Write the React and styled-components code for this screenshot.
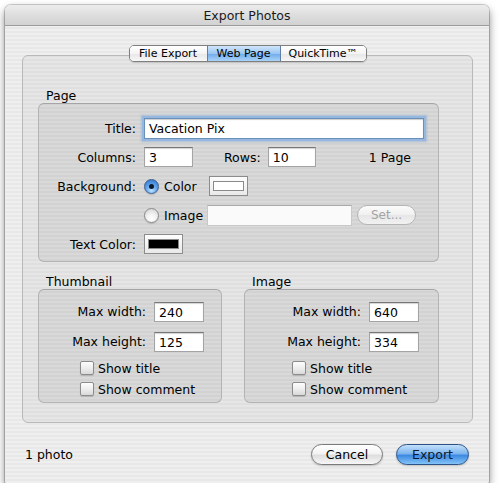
import React from "react";
import styled, { createGlobalStyle, css } from "styled-components";

const GlobalStyle = createGlobalStyle`
  html, body {
    margin: 0;
    padding: 0;
    background: #ffffff;
  }
  body {
    font-family: "DejaVu Sans", "Liberation Sans", sans-serif;
    font-size: 12.5px;
    color: #000;
  }
`;

const Page = styled.div`
  padding: 5px 0 0 5px;
`;

const Window = styled.div`
  width: 484px;
  height: 478px;
  box-sizing: border-box;
  display: flex;
  flex-direction: column;
  border-radius: 6px 6px 2px 2px;
  overflow: hidden;
  background: repeating-linear-gradient(
    180deg,
    #efefef 0px,
    #efefef 2px,
    #e8e8e8 2px,
    #e8e8e8 4px
  );
  box-shadow: 0 0 0 1px rgba(0, 0, 0, 0.18), 0 4px 9px rgba(0, 0, 0, 0.5);
`;

const TitleBar = styled.div`
  height: 20px;
  line-height: 21px;
  text-align: center;
  font-size: 12.5px;
  color: #1a1a1a;
  border-bottom: 1px solid #9c9c9c;
  background: linear-gradient(180deg, #ececec 0%, #dedede 50%, #d2d2d2 100%);
`;

const Content = styled.div`
  padding: 19px 16px 0 17px;
  display: flex;
  flex-direction: column;
`;

const Tabs = styled.div`
  position: relative;
  z-index: 1;
  align-self: center;
  display: flex;
  height: 17px;
  box-sizing: border-box;
  border: 1px solid #7f7f7f;
  border-radius: 5px;
  overflow: hidden;
  box-shadow: 0 1px 1px rgba(0, 0, 0, 0.15);
`;

const Tab = styled.div`
  width: ${(p) => p.w}px;
  box-sizing: border-box;
  text-align: center;
  line-height: 15px;
  font-size: 11px;
  background: linear-gradient(180deg, #ffffff 0%, #f4f4f4 50%, #e6e6e6 51%, #f7f7f7 100%);
  & + & {
    border-left: 1px solid #9a9a9a;
  }
  ${(p) =>
    p.active &&
    css`
      background: linear-gradient(180deg, #cfe5fb 0%, #9bc6f2 50%, #6eaaeb 51%, #a9d3f7 100%);
      border-left-color: #5f7fa8 !important;
      & + * {
        border-left-color: #5f7fa8 !important;
      }
    `}
`;

const TabBox = styled.div`
  margin-top: -7px;
  height: 368px;
  box-sizing: border-box;
  border: 1px solid #b9b9b9;
  border-radius: 6px;
  background: rgba(0, 0, 0, 0.035);
  padding: 32px 33px 19px 15px;
  display: flex;
  flex-direction: column;
`;

const GroupLabel = styled.div`
  height: 15px;
  line-height: 15px;
  padding-left: 8px;
`;

const GroupBox = styled.div`
  box-sizing: border-box;
  border: 1px solid #b3b3b3;
  border-top-color: #a5a5a5;
  border-radius: 6px;
  background: rgba(0, 0, 0, 0.055);
`;

const PageBox = styled(GroupBox)`
  height: 159px;
  padding: 13px 0 6px 0;
  display: flex;
  flex-direction: column;
  gap: 7px;
`;

const FormRow = styled.div`
  height: 22px;
  display: flex;
  align-items: center;
`;

const RowLabel = styled.div`
  width: 97px;
  margin-right: 8px;
  text-align: right;
  white-space: nowrap;
`;

const Spacer = styled.div`
  width: 105px;
`;

const TextField = styled.div`
  width: ${(p) => p.w}px;
  height: 20px;
  box-sizing: border-box;
  background: #fff;
  border: 1px solid #a4a4a4;
  border-top-color: #777;
  box-shadow: inset 0 1px 1px rgba(0, 0, 0, 0.18);
  line-height: 19px;
  padding-left: 4px;
  white-space: nowrap;
  ${(p) =>
    p.focused &&
    css`
      height: 21px;
      line-height: 20px;
      border-color: #6c8fb9;
      box-shadow: 0 0 0 2px #96b8e0, 0 0 2px 3px rgba(120, 160, 210, 0.45),
        inset 0 1px 1px rgba(0, 0, 0, 0.2);
    `}
  ${(p) =>
    p.disabled &&
    css`
      height: 21px;
      background: #fafafa;
      border-color: #c8c8c8;
      border-top-color: #aaa;
      box-shadow: none;
    `}
`;

const InlineLabel = styled.div`
  margin-left: ${(p) => p.ml || 0}px;
  margin-right: 7px;
`;

const PageCount = styled.div`
  margin-left: auto;
  padding-right: 27px;
`;

const RadioOption = styled.label`
  width: 63px;
  display: flex;
  align-items: center;
  gap: 5px;
`;

const Radio = styled.span`
  width: 15px;
  height: 15px;
  flex-shrink: 0;
  box-sizing: border-box;
  border-radius: 50%;
  display: inline-flex;
  align-items: center;
  justify-content: center;
  border: 1px solid #8a8a8a;
  background: radial-gradient(circle at 50% 75%, #ffffff 0%, #f2f2f2 40%, #cfcfcf 100%);
  box-shadow: 0 1px 1px rgba(0, 0, 0, 0.15);
  ${(p) =>
    p.checked &&
    css`
      border-color: #3b5f8e;
      background: radial-gradient(circle at 50% 80%, #bfe3ff 0%, #5fa5ec 45%, #2a6ec8 100%);
      &::after {
        content: "";
        width: 5px;
        height: 5px;
        border-radius: 50%;
        background: #0d1a2b;
      }
    `}
`;

const ColorWell = styled.div`
  width: 39px;
  height: 20px;
  margin-left: ${(p) => p.ml || 0}px;
  box-sizing: border-box;
  border: 1px solid #8c8c8c;
  background: linear-gradient(180deg, #fdfdfd, #e9e9e9);
  padding: 4px 3px;
  display: flex;
`;

const Swatch = styled.div`
  flex: 1;
  border: 1px solid #8a8a8a;
  background: ${(p) => p.color};
`;

const PillButton = styled.div`
  width: ${(p) => p.w}px;
  height: 21px;
  margin-left: ${(p) => p.ml || 0}px;
  box-sizing: border-box;
  border-radius: 11px;
  text-align: center;
  line-height: 19px;
  font-size: 12.5px;
  border: 1px solid #7a7a7a;
  background: linear-gradient(180deg, #ffffff 0%, #f3f3f3 45%, #dedede 55%, #f7f7f7 100%);
  box-shadow: 0 1px 2px rgba(0, 0, 0, 0.2);
  ${(p) =>
    p.primary &&
    css`
      border-color: #2d5287;
      background: linear-gradient(180deg, #c5e0fb 0%, #7db5ee 45%, #3d8ae3 55%, #83c3f7 100%);
      color: #0a1930;
    `}
  ${(p) =>
    p.disabled &&
    css`
      height: 20px;
      line-height: 18px;
      font-size: 12px;
      color: #a3a3a3;
      border-color: #b5b5b5;
      background: linear-gradient(180deg, #fbfbfb 0%, #f0f0f0 50%, #e6e6e6 51%, #f2f2f2 100%);
      box-shadow: none;
    `}
`;

const LowerRow = styled.div`
  margin-top: 12px;
  display: flex;
  gap: 22px;
`;

const Column = styled.div`
  width: ${(p) => p.w}px;
  display: flex;
  flex-direction: column;
`;

const DimBox = styled(GroupBox)`
  height: 114px;
  padding: 11px 0 0 0;
  display: flex;
  flex-direction: column;
`;

const DimRow = styled.div`
  height: 21px;
  margin-top: ${(p) => p.mt || 0}px;
  display: flex;
  align-items: center;
  justify-content: flex-end;
  gap: 8px;
  padding-right: ${(p) => p.pr}px;
`;

const CheckRow = styled.label`
  height: 18px;
  margin-top: ${(p) => p.mt || 0}px;
  padding-left: ${(p) => p.pl}px;
  display: flex;
  align-items: center;
  gap: 4px;
`;

const Checkbox = styled.span`
  width: 14px;
  height: 14px;
  box-sizing: border-box;
  border-radius: 2px;
  border: 1px solid #8c8c8c;
  background: linear-gradient(180deg, #fdfdfd 0%, #eeeeee 50%, #d9d9d9 100%);
  box-shadow: 0 1px 1px rgba(0, 0, 0, 0.15);
`;

const Footer = styled.div`
  padding: 21px 4px 0 3px;
  height: 21px;
  display: flex;
  align-items: center;
  gap: 13px;
`;

const Status = styled.div`
  margin-right: auto;
`;

function DimensionGroup({ title, w, pr, pl, width, height }) {
  return (
    <Column w={w}>
      <GroupLabel>{title}</GroupLabel>
      <DimBox>
        <DimRow pr={pr}>
          <span>Max width:</span>
          <TextField w={50}>{width}</TextField>
        </DimRow>
        <DimRow pr={pr} mt={9}>
          <span>Max height:</span>
          <TextField w={50}>{height}</TextField>
        </DimRow>
        <CheckRow pl={pl} mt={7}>
          <Checkbox />
          Show title
        </CheckRow>
        <CheckRow pl={pl} mt={3}>
          <Checkbox />
          Show comment
        </CheckRow>
      </DimBox>
    </Column>
  );
}

export default function App() {
  return (
    <Page>
      <GlobalStyle />
      <Window>
        <TitleBar>Export Photos</TitleBar>
        <Content>
          <Tabs>
            <Tab w={77}>File Export</Tab>
            <Tab w={73} active>Web Page</Tab>
            <Tab w={86}>QuickTime™</Tab>
          </Tabs>
          <TabBox>
            <GroupLabel>Page</GroupLabel>
            <PageBox>
              <FormRow>
                <RowLabel>Title:</RowLabel>
                <TextField w={280} focused>Vacation Pix</TextField>
              </FormRow>
              <FormRow>
                <RowLabel>Columns:</RowLabel>
                <TextField w={49}>3</TextField>
                <InlineLabel ml={31}>Rows:</InlineLabel>
                <TextField w={48}>10</TextField>
                <PageCount>1 Page</PageCount>
              </FormRow>
              <FormRow>
                <RowLabel>Background:</RowLabel>
                <RadioOption>
                  <Radio checked />
                  Color
                </RadioOption>
                <ColorWell ml={2}>
                  <Swatch color="#ffffff" />
                </ColorWell>
              </FormRow>
              <FormRow>
                <Spacer />
                <RadioOption>
                  <Radio />
                  Image
                </RadioOption>
                <TextField w={145} disabled />
                <PillButton w={59} ml={5} disabled>
                  Set...
                </PillButton>
              </FormRow>
              <FormRow>
                <RowLabel>Text Color:</RowLabel>
                <ColorWell>
                  <Swatch color="#000000" />
                </ColorWell>
              </FormRow>
            </PageBox>
            <LowerRow>
              <DimensionGroup title="Thumbnail" w={185} pr={17} pl={41} width="240" height="125" />
              <DimensionGroup title="Image" w={196} pr={19} pl={47} width="640" height="334" />
            </LowerRow>
          </TabBox>
          <Footer>
            <Status>1 photo</Status>
            <PillButton w={72}>Cancel</PillButton>
            <PillButton w={73} primary>Export</PillButton>
          </Footer>
        </Content>
      </Window>
    </Page>
  );
}
